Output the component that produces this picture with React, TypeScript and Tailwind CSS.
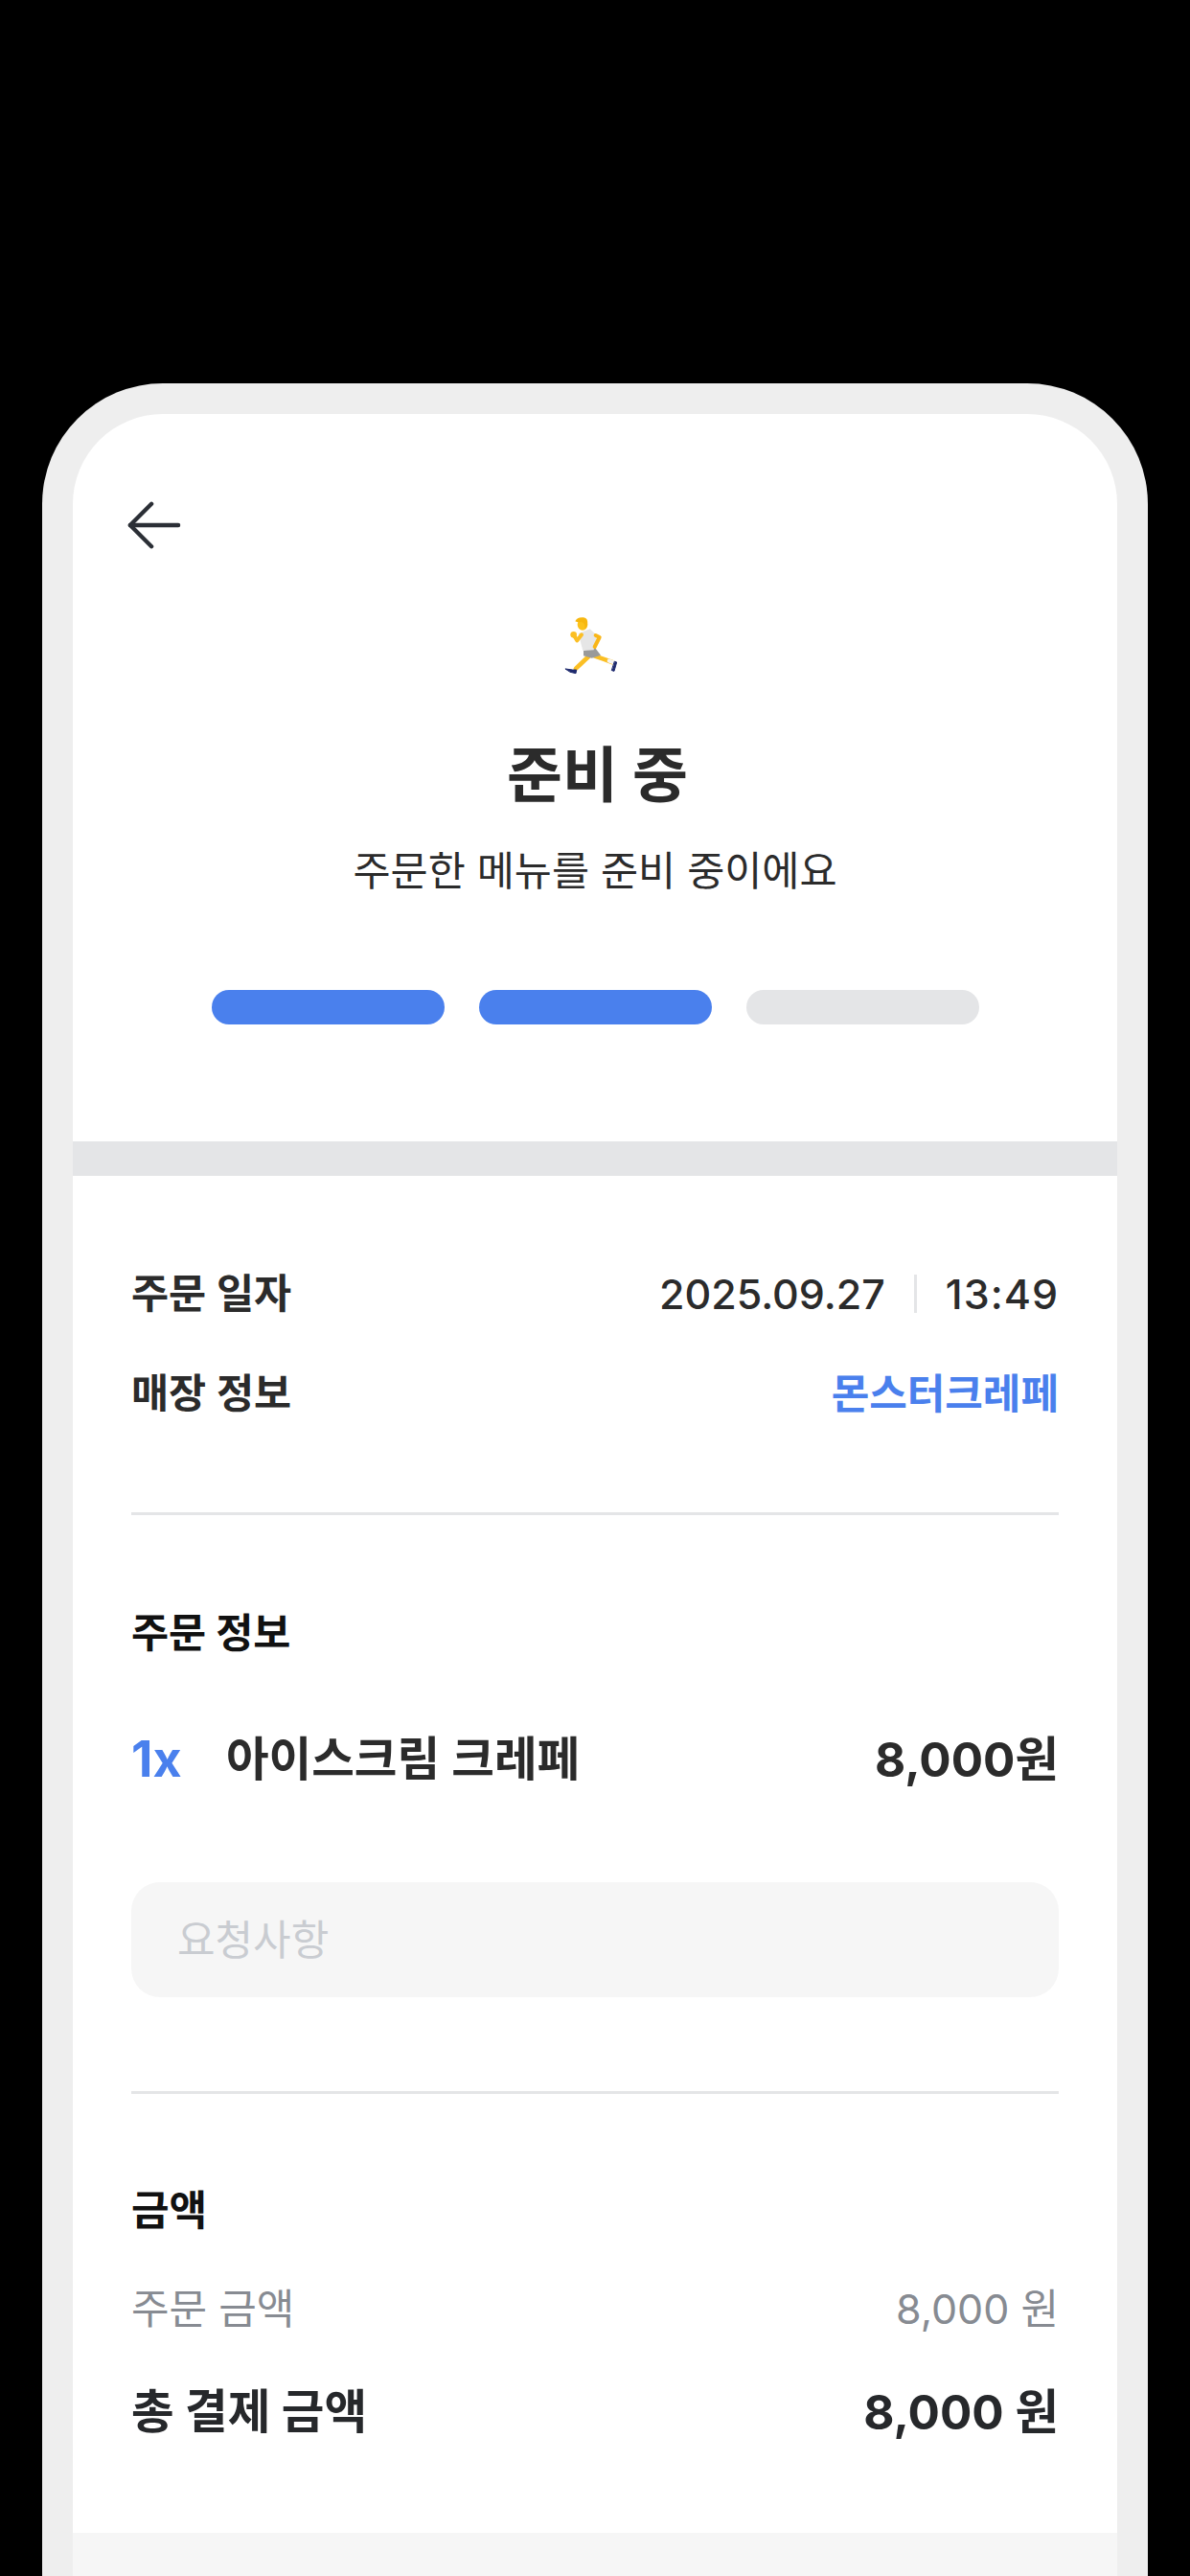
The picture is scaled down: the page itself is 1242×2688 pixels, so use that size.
const FONT = "font-['Inter','Noto_Sans_CJK_KR',sans-serif]";

function BackArrow() {
  return (
    <svg width="56" height="50" viewBox="0 0 58 50" fill="none" stroke="#2b2f36" strokeWidth="4.5" strokeLinecap="round" strokeLinejoin="round">
      <path d="M26 2 L3 25 L26 48" />
      <path d="M3 25 H55" />
    </svg>
  );
}

// runner emoji, drawn because no colour emoji font is available
function Runner() {
  return (
    <svg width="60" height="66" viewBox="140 55 180 198" fill="none" strokeLinecap="round" strokeLinejoin="round">
      <path d="M222 190 L182 228" stroke="#fbbf24" strokeWidth="14" />
      <path d="M240 188 L268 198 L296 208" stroke="#fbbf24" strokeWidth="14" />
      <path d="M286 204 L298 208" stroke="#f4f4f4" strokeWidth="12" />
      <path d="M150 229 L172 232 L184 232 L182 243 L165 239 Z" fill="#1e2a6e" stroke="#1e2a6e" strokeWidth="3" />
      <path d="M304 206 L310 208 L302 236 L295 234 Z" fill="#1e2a6e" stroke="#1e2a6e" strokeWidth="3" />
      <path d="M206 172 L240 160 L260 186 L232 195 L206 188 Z" fill="#9a9a9a" />
      <path d="M190 118 L226 104 L248 124 L238 170 L204 172 Z" fill="#e6e6e6" />
      <path d="M200 122 L186 140 L176 124" stroke="#fbbf24" strokeWidth="12" />
      <circle cx="175" cy="122" r="10" fill="#fbbf24" />
      <path d="M244 124 L256 130 L241 160" stroke="#f9b618" strokeWidth="12" />
      <ellipse cx="203" cy="90" rx="16" ry="18" fill="#fcc21b" />
      <path d="M180 80 Q186 66 206 68 Q222 70 218 92 Q214 104 210 102 Q212 84 198 82 Q188 84 180 80 Z" fill="#f7b70f" />
    </svg>
  );
}

function Row({ left, right, className }: { left: string; right: React.ReactNode; className?: string }) {
  return (
    <div className={`flex items-center justify-between ${className ?? ""}`}>
      <span>{left}</span>
      <span>{right}</span>
    </div>
  );
}

export default function App() {
  return (
    <div className={`h-[2688px] overflow-hidden bg-black px-[44px] pt-[400px] ${FONT}`}>
      <div className="h-[2288px] rounded-t-[126px] bg-[#eeeeee] px-[32px] pt-[32px]">
        <div className="flex h-[2256px] flex-col overflow-hidden rounded-t-[94px] bg-white">
          <section className="flex flex-col pb-[122px]">
            <div className="ml-[57px] mt-[91px]">
              <BackArrow />
            </div>
            <div className="mt-[67px] flex justify-center pr-[8px]">
              <Runner />
            </div>
            <h1 className="mt-[60px] pl-[5px] text-center text-[63px] leading-[84px] font-bold text-[#2b2b2b]">준비 중</h1>
            <p className="mt-[29px] text-center text-[42.5px] leading-[60px] text-[#2b2b2b]">주문한 메뉴를 준비 중이에요</p>
            <div className="mt-[94px] flex justify-center gap-[36px]">
              <div className="h-[36px] w-[243px] rounded-[18px] bg-[#4a80ed]" />
              <div className="h-[36px] w-[243px] rounded-[18px] bg-[#4a80ed]" />
              <div className="h-[36px] w-[243px] rounded-[18px] bg-[#e4e5e7]" />
            </div>
          </section>
          <div className="h-[36px] bg-[#e4e5e7]" />
          <section className="flex-1 px-[61px] pt-[93px]">
            <Row
              className="h-[60px] text-[42.5px] font-semibold text-[#2b2b2b]"
              left="주문 일자"
              right={
                <span className="flex items-center text-[43px] font-medium">
                  2025.09.27
                  <span className="mx-[30px] h-[40px] w-[3px] bg-[#e4e5e7]" />
                  <span className="tracking-[1px]">13:49</span>
                </span>
              }
            />
            <Row
              className="mt-[44px] h-[60px] text-[42.5px] font-semibold text-[#2b2b2b]"
              left="매장 정보"
              right={<span className="text-[43px] font-bold text-[#4a80ed]">몬스터크레페</span>}
            />
            <div className="mt-[94px] h-[3px] bg-[#e4e5e7]" />
            <h2 className="mt-[93px] text-[42.5px] leading-[60px] font-bold text-[#111111]">주문 정보</h2>
            <div className="mt-[72px] flex h-[60px] items-center text-[48.5px] font-semibold text-[#2b2b2b]">
              <span className="w-[99px] text-[52px] font-bold text-[#4a80ed]">1x</span>
              <span>아이스크림 크레페</span>
              <span className="ml-auto text-[49.5px] font-bold">8,000원</span>
            </div>
            <div className="mt-[98px] flex h-[120px] items-center rounded-[30px] bg-[#f6f6f6] px-[48px] text-[43px] text-[#c9ccd1]">
              요청사항
            </div>
            <div className="mt-[98px] h-[3px] bg-[#e4e5e7]" />
            <h2 className="mt-[91px] text-[43px] leading-[60px] font-bold text-[#111111]">금액</h2>
            <Row className="mt-[43px] h-[60px] text-[43px] text-[#878b92]" left="주문 금액" right="8,000 원" />
            <Row className="mt-[43px] h-[70px] text-[48.5px] font-bold text-[#26282b]" left="총 결제 금액" right={<span className="text-[49.5px]">8,000 원</span>} />
          </section>
          <div className="h-[45px] bg-[#f6f6f6]" />
        </div>
      </div>
    </div>
  );
}
